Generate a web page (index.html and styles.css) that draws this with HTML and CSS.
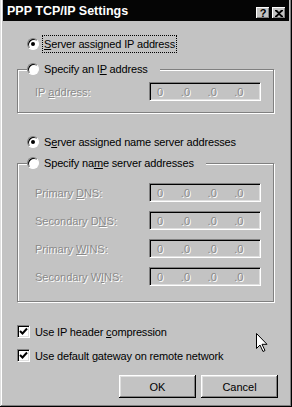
FILE: index.html
```html
<!DOCTYPE html>
<html lang="en">
<head>
    <meta charset="UTF-8">
    <title>PPP TCP/IP Settings</title>
    <link rel="stylesheet" href="styles.css">
</head>
<body>
    <div class="window">
        <div class="titlebar">
            <span class="title">PPP TCP/IP Settings</span>
            <div class="title-buttons">
                <span class="tbtn">?</span>
                <span class="tbtn">
                    <svg width="8" height="7" viewBox="0 0 8 7">
                        <path d="M0 0h2l2 2 2-2h2v1L5 3.5 8 6v1H6L4 5 2 7H0V6l3-2.5L0 1z" fill="#000"/>
                    </svg>
                </span>
            </div>
        </div>

        <div class="body">
            <div class="radio-row top-option">
                <span class="radio checked"></span>
                <span class="focus"><u>S</u>erver assigned IP address</span>
            </div>

            <fieldset class="group group-ip">
                <legend class="radio-row"><span class="radio"></span><span>Specify an I<u>P</u> address</span></legend>
                <div class="field">
                    <span class="field-label">IP <u>a</u>ddress:</span>
                    <span class="ip"><span>0</span><span>.0</span><span>.0</span><span>.0</span></span>
                </div>
            </fieldset>

            <div class="radio-row name-option">
                <span class="radio checked"></span>
                <span>S<u>e</u>rver assigned name server addresses</span>
            </div>

            <fieldset class="group group-dns">
                <legend class="radio-row"><span class="radio"></span><span>Specify na<u>m</u>e server addresses</span></legend>
                <div class="field">
                    <span class="field-label">Primary <u>D</u>NS:</span>
                    <span class="ip"><span>0</span><span>.0</span><span>.0</span><span>.0</span></span>
                </div>
                <div class="field">
                    <span class="field-label">Secondary D<u>N</u>S:</span>
                    <span class="ip"><span>0</span><span>.0</span><span>.0</span><span>.0</span></span>
                </div>
                <div class="field">
                    <span class="field-label">Primary <u>W</u>INS:</span>
                    <span class="ip"><span>0</span><span>.0</span><span>.0</span><span>.0</span></span>
                </div>
                <div class="field">
                    <span class="field-label">Secondary W<u>I</u>NS:</span>
                    <span class="ip"><span>0</span><span>.0</span><span>.0</span><span>.0</span></span>
                </div>
            </fieldset>

            <div class="check-row first-check">
                <span class="checkbox">
                    <svg width="9" height="9" viewBox="0 0 9 9"><path d="M1 4l2.5 2.5L8 1.5" stroke="#000" stroke-width="2" fill="none"/></svg>
                </span>
                <span>Use IP header <u>c</u>ompression</span>
            </div>
            <div class="check-row">
                <span class="checkbox">
                    <svg width="9" height="9" viewBox="0 0 9 9"><path d="M1 4l2.5 2.5L8 1.5" stroke="#000" stroke-width="2" fill="none"/></svg>
                </span>
                <span>Use default gateway on remote network</span>
            </div>

            <div class="actions">
                <button class="btn">OK</button>
                <button class="btn">Cancel</button>
            </div>
        </div>

        <!-- mouse pointer left in the screenshot -->
        <svg class="pointer" width="12" height="20" viewBox="0 0 12 20">
            <path d="M0.5 0.5v15l3.5-3.5 3 6.5 2-1-3-6.2h5z" fill="#fff" stroke="#000" stroke-width="1"/>
        </svg>
    </div>
</body>
</html>
```

FILE: styles.css
```css
* {
    margin: 0;
    padding: 0;
    box-sizing: border-box;
}

body {
    font-family: 'Liberation Sans', Arial, sans-serif;
    font-size: 11px;
    background: #c3c3c3;
    color: #000;
}

u {
    text-decoration: underline;
    text-underline-offset: 1px;
}

/* Dialog frame */
.window {
    position: relative;
    width: 292px;
    height: 407px;
    padding: 0 3px 3px 3px;
    background: #c3c3c3;
    box-shadow: inset -1px -1px #000, inset 1px 0 #dfdfdf, inset -2px -2px #808080, inset 2px 0 #fff;
}

.titlebar {
    height: 21px;
    display: flex;
    align-items: flex-end;
    justify-content: space-between;
    padding: 0 3px 1px 4px;
    background: #050505;
    color: #fff;
}

.title {
    font-weight: bold;
    font-size: 12.5px;
    line-height: 17px;
}

.title-buttons {
    display: flex;
    gap: 2px;
    margin-bottom: 1px;
}

.tbtn {
    width: 14px;
    height: 12px;
    display: flex;
    align-items: center;
    justify-content: center;
    background: #c3c3c3;
    color: #000;
    font-weight: bold;
    font-size: 11px;
    line-height: 10px;
    box-shadow: inset -1px -1px #000, inset 1px 1px #fff, inset -2px -2px #808080;
}

/* Content */
.body {
    padding: 0 0 0 14px;
}

.radio-row {
    display: flex;
    align-items: center;
    height: 16px;
    line-height: 14px;
    letter-spacing: -0.15px;
}

.radio {
    width: 12px;
    height: 12px;
    margin-right: 5px;
    border-radius: 50%;
    background: #fff;
    border: 1px solid;
    border-color: #808080 #fff #fff #808080;
    box-shadow: inset 1px 1px #000;
    position: relative;
}

.radio.checked::after {
    content: '';
    position: absolute;
    left: 3px;
    top: 3px;
    width: 4px;
    height: 4px;
    border-radius: 50%;
    background: #000;
}

.top-option {
    margin: 15px 0 0 10px;
}

.focus {
    outline: 1px dotted #000;
    outline-offset: 0;
    padding: 0 1px;
    margin-left: -1px;
    line-height: 16px;
}

.name-option {
    margin: 21px 0 0 10px;
}

/* Group boxes */
.group {
    width: 257px;
    border: 1px solid #808080;
    box-shadow: inset 1px 1px #fff, 1px 1px #fff;
    padding: 0 12px 0 9px;
}

.group legend {
    height: 14px;
    padding: 0 12px 0 0;
    background: #c3c3c3;
}

.group-ip {
    margin-top: 10px;
    padding-top: 6px;
    padding-bottom: 11px;
}

.group-dns {
    margin-top: 6px;
    padding-top: 13px;
    padding-bottom: 15px;
    display: flex;
    flex-direction: column;
    gap: 9px;
}

.field {
    display: flex;
    align-items: center;
    justify-content: space-between;
    padding-left: 8px;
    height: 19px;
}

.field-label,
.ip {
    color: #8a8a8a;
    text-shadow: 1px 1px #fff;
}

.ip {
    width: 112px;
    height: 19px;
    display: flex;
    align-items: center;
    padding-left: 3px;
    border: 1px solid;
    border-color: #808080 #fff #fff #808080;
    box-shadow: inset 1px 1px #000, inset -1px -1px #dfdfdf;
}

.ip span {
    width: 28px;
    padding-left: 1px;
}

.ip span:first-child {
    padding-left: 4px;
}

/* Check boxes */
.check-row {
    display: flex;
    align-items: center;
    height: 15px;
    margin-top: 9px;
    letter-spacing: -0.15px;
}

.first-check {
    margin-top: 22px;
}

.checkbox {
    width: 13px;
    height: 13px;
    margin-right: 5px;
    display: flex;
    align-items: center;
    justify-content: center;
    background: #fff;
    border: 1px solid;
    border-color: #808080 #fff #fff #808080;
    box-shadow: inset 1px 1px #000, inset -1px -1px #dfdfdf;
}

/* Buttons */
.actions {
    display: flex;
    justify-content: flex-end;
    gap: 5px;
    margin-top: 12px;
    padding-right: 11px;
}

.btn {
    width: 77px;
    height: 23px;
    border: none;
    background: #c3c3c3;
    font-family: 'Liberation Sans', Arial, sans-serif;
    font-size: 11px;
    color: #000;
    box-shadow: inset -1px -1px #000, inset 1px 1px #fff, inset -2px -2px #808080, inset 2px 2px #dfdfdf;
}

.pointer {
    position: absolute;
    left: 256px;
    top: 333px;
}
```
